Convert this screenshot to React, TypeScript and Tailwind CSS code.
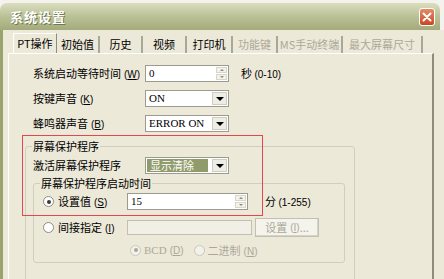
import React from 'react'

const Key = ({ k }: { k: string }) => (
  <span className="ml-[3px] font-['Liberation_Sans',sans-serif] text-[10px]">
    (<span className="underline underline-offset-1">{k}</span>)
  </span>
)

function Spin() {
  return (
    <div className="my-px mr-px flex w-[11px] flex-col gap-px">
      <div className="flex flex-1 items-center justify-center border border-[#d8d6ca] bg-[#f2f1ea]">
        <span className="h-0 w-0 border-x-[2px] border-b-[2px] border-x-transparent border-b-[#8d8b80]" />
      </div>
      <div className="flex flex-1 items-center justify-center border border-[#d8d6ca] bg-[#f2f1ea]">
        <span className="h-0 w-0 border-x-[2px] border-t-[2px] border-x-transparent border-t-[#8d8b80]" />
      </div>
    </div>
  )
}

function SpinBox({ value, width }: { value: string; width: string }) {
  return (
    <div className={`flex h-[17px] border border-[#9d9b8f] bg-white ${width}`}>
      <span className="flex-1 pl-[3px] font-['Liberation_Serif',serif] text-[11px] leading-[15px]">{value}</span>
      <Spin />
    </div>
  )
}

function Combo({ value, selected }: { value: string; selected?: boolean }) {
  return (
    <div className="flex h-[17px] w-[84px] border border-[#9d9b8f] bg-white p-px">
      {selected ? (
        <span className="w-[61px] whitespace-nowrap bg-[#8f9b6b] pl-[3px] leading-[13px] text-white">{value}</span>
      ) : (
        <span className="whitespace-nowrap pl-[2px] font-['Liberation_Serif',serif] text-[11px] leading-[13px]">{value}</span>
      )}
      <div className="ml-auto flex w-[15px] items-center justify-center border border-[#cfcdc0] bg-[#eeede5]">
        <span className="h-0 w-0 border-x-[4px] border-t-[4px] border-x-transparent border-t-black" />
      </div>
    </div>
  )
}

function Radio({ checked, disabled }: { checked?: boolean; disabled?: boolean }) {
  return (
    <span
      className={`flex h-[11px] w-[11px] shrink-0 items-center justify-center rounded-full border ${
        disabled ? 'border-[#cac8bb] bg-[#f2f1ea]' : 'border-[#8e8c80] bg-white'
      }`}
    >
      {checked && <span className={`h-[4px] w-[4px] rounded-full ${disabled ? 'bg-[#aca899]' : 'bg-[#3b3b3b]'}`} />}
    </span>
  )
}

const tabs = [
  { label: 'PT操作', w: 'w-[44px]' },
  { label: '初始值', w: 'w-[43px]' },
  { label: '历史', w: 'w-[43px]' },
  { label: '视频', w: 'w-[44px]' },
  { label: '打印机', w: 'w-[46px]' },
  { label: '功能键', w: 'w-[45px]', off: true },
  { label: 'MS手动终端', w: 'w-[65px]', off: true },
  { label: '最大屏幕尺寸', w: 'w-[80px]', off: true },
]

export default function App() {
  return (
    <div className="relative h-[279px] w-[444px] overflow-hidden whitespace-nowrap bg-[#f3f2ec] pt-[3px] font-['Noto_Sans_CJK_SC','Noto_Sans',sans-serif] text-[11px] text-black">
      {/* Title bar */}
      <div className="flex h-[27px] w-[440px] items-center justify-between rounded-t-[7px] bg-gradient-to-b from-[#dadebf] via-[#bac195] to-[#a3ab7c] pl-[10px] pr-[5px]">
        <span className="text-[13px] font-bold tracking-[1px] text-white [text-shadow:1px_1px_0_#6f7850]">系统设置</span>
        <div className="flex h-[18px] w-[16px] items-center justify-center rounded-[3px] border border-white bg-gradient-to-b from-[#e58a66] to-[#c9461f]">
          <svg width="10" height="10" viewBox="0 0 10 10">
            <path d="M1.5 1.5 L8.5 8.5 M8.5 1.5 L1.5 8.5" stroke="white" strokeWidth="2" strokeLinecap="round" />
          </svg>
        </div>
      </div>

      <div className="flex h-[249px]">
        <div className="w-[3px] bg-[#98a36e]" />
        <div className="flex-1 bg-[#ece9d8] pl-[5px]">
          {/* Tabs */}
          <div className="flex h-[23px] items-end pl-[5px]">
            {tabs.map((t, i) =>
              i === 0 ? (
                <div
                  key={t.label}
                  className={`flex h-[20px] items-center justify-center border-l border-t border-r border-l-white border-t-white border-r-[#8e8c7e] ${t.w}`}
                >
                  {t.label}
                </div>
              ) : (
                <div
                  key={t.label}
                  className={`flex h-[17px] items-center justify-center border-r-2 border-r-[#a9a796] ${t.w} ${
                    t.off ? 'text-[#aca899]' : ''
                  }`}
                >
                  {t.label}
                </div>
              ),
            )}
          </div>

          {/* Panel */}
          <div className="h-[226px] w-[426px] border-l border-t border-r-2 border-l-white border-t-white border-r-[#8e8c7e] pl-[16px] pt-[11px]">
            <div className="flex flex-col gap-[8px] pl-[8px]">
              <div className="flex h-[17px] items-center">
                <span className="w-[112px]">
                  系统启动等待时间<Key k="W" />
                </span>
                <SpinBox value="0" width="w-[84px]" />
                <span className="ml-[12px]">
                  秒 <span className="font-['Liberation_Sans',sans-serif] text-[10px]">(0-10)</span>
                </span>
              </div>
              <div className="flex h-[17px] items-center">
                <span className="w-[112px]">
                  按键声音<Key k="K" />
                </span>
                <Combo value="ON" />
              </div>
              <div className="flex h-[17px] items-center">
                <span className="w-[112px]">
                  蜂鸣器声音<Key k="B" />
                </span>
                <Combo value="ERROR ON" />
              </div>
            </div>

            <fieldset className="mt-[8px] w-[330px] rounded-[3px] border border-[#d0cebf] pb-[20px]">
              <legend className="ml-[6px] px-px leading-[13px]">屏幕保护程序</legend>
              <div className="mt-[4px] flex h-[17px] items-center pl-[7px]">
                <span className="w-[112px]">激活屏幕保护程序</span>
                <Combo value="显示清除" selected />
              </div>

              <fieldset className="ml-[7px] mt-[3px] w-[312px] rounded-[3px] border border-[#d0cebf] pb-[6px]">
                <legend className="ml-[6px] px-px leading-[13px]">屏幕保护程序启动时间</legend>
                <div className="pl-[9px]">
                  <div className="mt-[3px] flex h-[17px] items-center">
                    <span className="flex w-[84px] items-center gap-[4px]">
                      <Radio checked />
                      <span>
                        设置值<Key k="S" />
                      </span>
                    </span>
                    <SpinBox value="15" width="w-[121px]" />
                    <span className="ml-[17px]">
                      分 <span className="font-['Liberation_Sans',sans-serif] text-[10px]">(1-255)</span>
                    </span>
                  </div>
                  <div className="mt-[8px] flex h-[19px] items-center">
                    <span className="flex w-[84px] items-center gap-[4px]">
                      <Radio />
                      <span>
                        间接指定<Key k="I" />
                      </span>
                    </span>
                    <div className="h-[15px] w-[125px] border border-[#c2c0b2] bg-[#f1efe6]" />
                    <div className="ml-[3px] flex h-[19px] w-[64px] items-center justify-center border border-[#c2c0b2] bg-[#f4f3ec] text-[#aca899] shadow-[inset_-1px_-1px_0_#d6d4c8]">
                      设置<Key k="I" />...
                    </div>
                  </div>
                  <div className="mt-[7px] flex h-[12px] items-center pl-[87px] text-[#aca899]">
                    <span className="flex items-center gap-[3px]">
                      <Radio checked disabled />
                      <span className="font-['Liberation_Serif',serif]">
                        BCD<Key k="D" />
                      </span>
                    </span>
                    <span className="ml-[10px] flex items-center gap-[3px]">
                      <Radio disabled />
                      <span>
                        二进制<Key k="N" />
                      </span>
                    </span>
                  </div>
                </div>
              </fieldset>
            </fieldset>
          </div>
        </div>
      </div>

      {/* Annotation box */}
      <div className="pointer-events-none absolute left-[22px] top-[135px] h-[81px] w-[241px] border-[1.5px] border-[#e2474b]" />
    </div>
  )
}
